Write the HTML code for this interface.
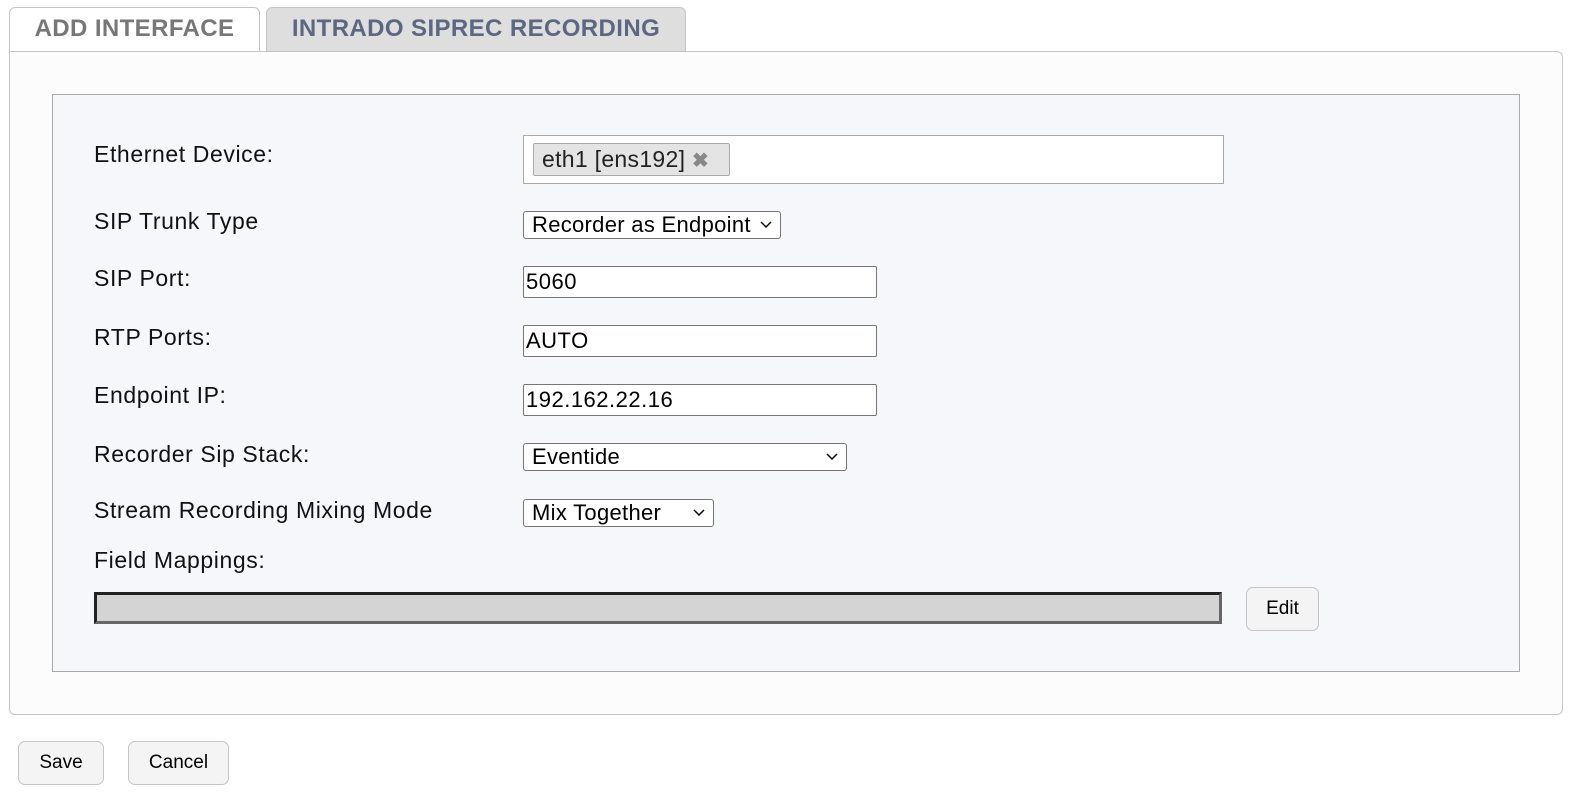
<!DOCTYPE html>
<html><head><meta charset="utf-8"><style>
*{box-sizing:border-box}
body{margin:0;width:1577px;height:800px;background:#fff;font-family:"Liberation Sans",Arial,sans-serif;position:relative;overflow:hidden;color:#111}
.a{position:absolute}
.tab{position:absolute;top:7px;height:44px;border:1px solid #c5c5c5;border-bottom:none;border-radius:6px 6px 0 0;font-size:24px;line-height:42px;text-align:center;font-weight:bold;letter-spacing:0.4px}
.lbl{position:absolute;left:94px;font-size:23px;line-height:26px;color:#111;letter-spacing:0.6px}
.inp{position:absolute;left:523px;background:#fff;border:1px solid #767676;border-radius:2px;font-size:22px;padding-left:2px;color:#000;letter-spacing:0.5px}
.sel{position:absolute;left:523px;background:#fff;border:1px solid #767676;border-radius:3px;font-size:22px;padding-left:8px;color:#000;letter-spacing:0.3px}
.sel svg{position:absolute;right:8px;top:50%;margin-top:-4px}
.btn{position:absolute;background:#f4f4f4;border:1px solid #c5c5c5;border-radius:7px;font-size:19px;text-align:center;color:#000}
</style></head><body>
<div class="tab" style="left:9px;width:251px;background:#fff;color:#777;">ADD INTERFACE</div>
<div class="tab" style="left:266px;width:420px;background:#dedede;color:#5d6782;">INTRADO SIPREC RECORDING</div>
<div class="a" style="left:9px;top:51px;width:1554px;height:664px;background:#fcfcfc;border:1px solid #c5c5c5;border-radius:0 6px 6px 6px"></div>
<div class="a" style="left:52px;top:94px;width:1468px;height:578px;background:#f6f7fb;border:1px solid #aaa"></div>

<div class="lbl" style="top:141px">Ethernet Device:</div>
<div class="a" style="left:523px;top:135px;width:701px;height:49px;background:#fff;border:1px solid #aaa"></div>
<div class="a" style="left:533px;top:143px;width:197px;height:33px;background:#e4e4e4;border:1px solid #aaa;border-radius:2px;font-size:23px;line-height:31px;padding-left:8px;color:#222;letter-spacing:0.3px;white-space:nowrap">eth1 [ens192] <span style="color:#888;font-weight:bold;font-size:20px">✖</span></div>

<div class="lbl" style="top:208px">SIP Trunk Type</div>
<div class="sel" style="top:211px;width:258px;height:28px;line-height:26px">Recorder as Endpoint<svg width="12" height="8"><path d="M1 1l5 5 5-5" stroke="#000" stroke-width="1.5" fill="none"/></svg></div>

<div class="lbl" style="top:265px">SIP Port:</div>
<div class="inp" style="top:266px;width:354px;height:32px;line-height:30px">5060</div>
<div class="lbl" style="top:324px">RTP Ports:</div>
<div class="inp" style="top:325px;width:354px;height:32px;line-height:30px">AUTO</div>
<div class="lbl" style="top:382px">Endpoint IP:</div>
<div class="inp" style="top:384px;width:354px;height:32px;line-height:30px">192.162.22.16</div>

<div class="lbl" style="top:441px">Recorder Sip Stack:</div>
<div class="sel" style="top:443px;width:324px;height:28px;line-height:26px">Eventide<svg width="12" height="8"><path d="M1 1l5 5 5-5" stroke="#000" stroke-width="1.5" fill="none"/></svg></div>
<div class="lbl" style="top:497px">Stream Recording Mixing Mode</div>
<div class="sel" style="top:499px;width:191px;height:28px;line-height:26px">Mix Together<svg width="12" height="8"><path d="M1 1l5 5 5-5" stroke="#000" stroke-width="1.5" fill="none"/></svg></div>
<div class="lbl" style="top:547px">Field Mappings:</div>
<div class="a" style="left:94px;top:592px;width:1128px;height:32px;background:#d4d4d4;border:3px solid;border-color:#222 #666 #666 #222"></div>
<div class="btn" style="left:1246px;top:587px;width:73px;height:44px;line-height:42px">Edit</div>

<div class="btn" style="left:18px;top:741px;width:86px;height:44px;line-height:42px">Save</div>
<div class="btn" style="left:128px;top:741px;width:101px;height:44px;line-height:42px">Cancel</div>
</body></html>
